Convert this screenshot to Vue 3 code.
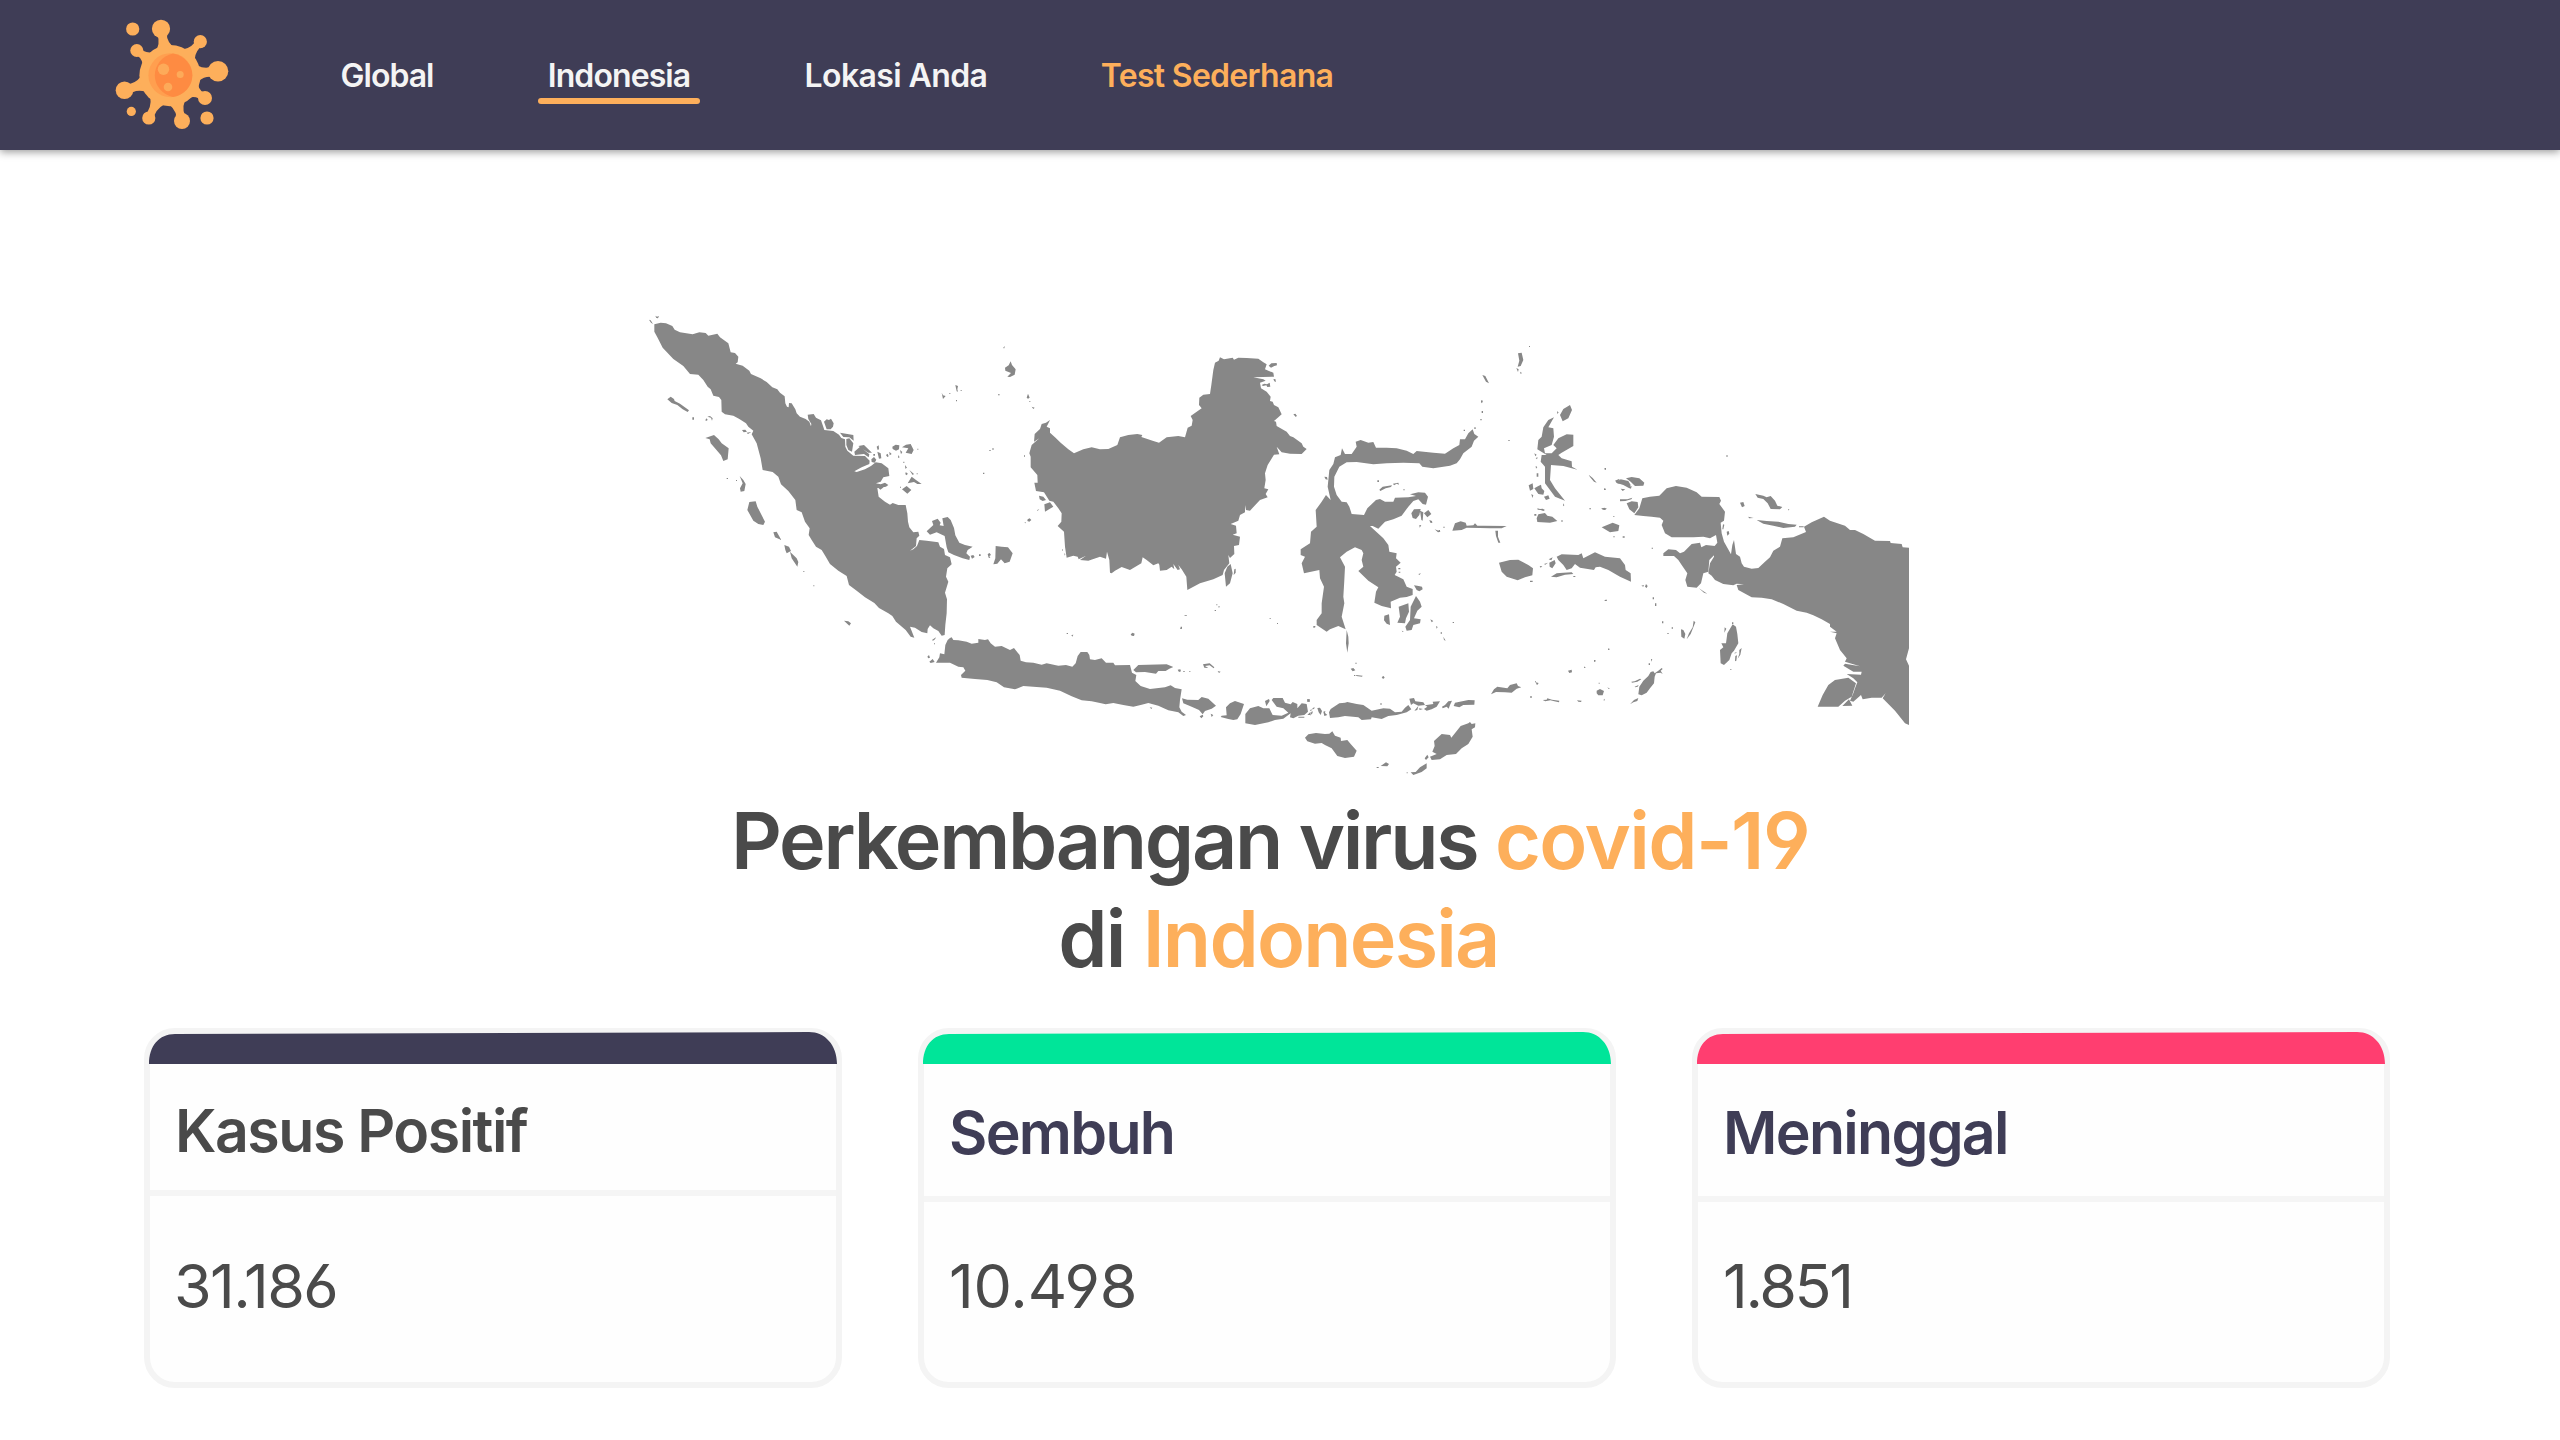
<script setup>
const links = [
  { label: 'Global', cls: 'w-global' },
  { label: 'Indonesia', cls: 'w-indonesia active' },
  { label: 'Lokasi Anda', cls: 'w-lokasi' },
  { label: 'Test Sederhana', cls: 'w-test accent' },
]

const cards = [
  { title: 'Kasus Positif', value: '31.186', cls: 'positive' },
  { title: 'Sembuh', value: '10.498', cls: 'recovered' },
  { title: 'Meninggal', value: '1.851', cls: 'deaths' },
]

// Virus logo: spikes are knobs joined to the body by flared necks.
const body = { x: 170, y: 75.6 }
const knobs = [
  [161, 28.8, 9.1], [136.8, 50.5, 6.5], [200.3, 41.7, 6.6], [218, 71.3, 10.3],
  [124.5, 90.2, 8.8], [205, 98, 7], [148.8, 118, 6.6], [182, 121, 8],
]
const specks = [[132.7, 29, 6.6], [131.3, 111.4, 4.6], [207, 118, 6.6]]
const necks = knobs.map(([x, y, r]) => {
  const dx = x - body.x
  const dy = y - body.y
  const d = Math.hypot(dx, dy)
  const ux = dx / d
  const uy = dy / d
  const p = (along, off) =>
    `${(body.x + ux * along - uy * off).toFixed(2)} ${(body.y + uy * along + ux * off).toFixed(2)}`
  const m = (29 + d) / 2 - 1
  return `M${p(28, 8)}Q${p(m, 1.4)} ${p(d, r * 0.75)}L${p(d, -r * 0.75)}Q${p(m, -1.4)} ${p(28, -8)}Z`
})

// Map outlines, drawn at three units per pixel from each region's origin.
const regions = [
  {
    x: 640, y: 300,
    d: `M43 73L62 68L78 70L97 78L104 89L120 97L158 103L178 97L197 99L205 107L232 101L240 112L265 130L272 157L285 159L295 170L293 187L287 191L308 197L328 212L333 222L362 235L380 246L397 262L412 268L420 278L434 289L436 310L441 320L446 322L447 309L455 310L466 328L470 340L480 350L497 357L508 365L513 379L514 372L505 357L503 344L521 342L528 353L543 361L549 378L553 390L580 393L597 404L604 414L615 418L616 440L622 452L640 467L675 468L689 482L688 492L665 502L643 514L650 516L675 508L693 498L707 487L725 490L745 505L748 528L730 532L722 545L708 550L722 553L735 548L745 555L738 560L712 564L716 590L735 605L750 614L758 609L775 615L797 615L802 640L804 665L808 682L820 697L835 695L838 707L830 715L828 738L810 752L820 748L831 738L838 720L860 722L895 727L900 740L912 747L915 765L930 772L935 793L922 805L918 830L925 845L915 878L921 898L920 940L916 975L914 1005L905 1007L895 993L880 985L870 976L863 987L862 1000L845 996L825 983L810 980L823 1013L812 1010L797 990L768 965L757 948L745 940L717 924L703 909L675 892L650 872L627 855L620 828L595 812L570 792L556 768L545 750L528 740L515 720L506 705L509 685L495 665L485 637L470 630L466 600L445 573L423 553L415 530L398 516L368 510L362 475L350 430L335 403L340 392L325 380L318 370L298 357L280 347L255 343L245 335L244 300L237 291L220 287L212 268L203 260L190 240L175 224L150 222L130 198L100 177L68 143L52 112L43 95Z
    M27 59l5 2 7 11-6-4zM46 47l5 3 6-2-3 7-5-1z
    M82 298L92 290L102 297L104 303L120 311L147 331L143 336L128 328L112 315L95 309Z
    M157 352h5v7h-5zM196 360l4-5 3 5-5 3zM202 350l8-2 8 7-2 7-3-9z
    M196 414L222 405L236 418L245 430L266 445L263 478L250 483L243 466L212 430L209 418Z
    M260 534h4v3h-4zM288 540h3v3h-3zM299 528L310 540L317 552L313 573L302 575L300 565L308 550Z
    M328 606L347 604L352 620L362 640L375 665L370 675L355 672L340 662L322 630Z
    M400 697L410 695L424 720L405 712ZM433 735L447 740L453 753L440 760L436 750ZM450 755L470 775L475 786L472 800L455 775Z
    M306 390l10-1 5 6-10 2zM320 398l14-2-10 6zM612 962L625 964L633 970L628 977Z
    M552 365L560 358L567 360L573 356L581 370L579 380L572 388L560 388Z
    M600 398L640 405L641 422L628 412L610 411ZM619 417L628 415L640 430L636 455L625 450L619 435Z
    M643 455L660 440L688 463L686 472L672 462L645 465ZM655 438L672 435L696 458L685 458Z
    M710 440l6-4 1 12-4 2zM712 455L722 460L724 475L717 476ZM694 478l8-7 7 8-5 9-9-2zM700 462h5v5h-5zM738 465l5-4 3 8-4 2zM748 455l7 7-6 4zM757 440l10-6 11 2-1 12-9 4-10-5zM780 450l7 6-4 7zM775 465l4 7-5 2zM786 442L798 434L812 432L821 450L815 462L797 458L805 445ZM832 446h3v3h-3zM790 485h3v4h-3zM795 495l6 8-5 3zM797 517l6 3-2 6-5-3zM808 510l14 12-4 3zM830 520h3v3h-3z
    M803 550L815 530L828 540L845 552L832 552L822 546ZM786 568L800 558L814 570L802 581L795 575ZM780 560h3v3h-3zM713 562l20-2-12 9z
    M860 694L880 675L876 663L893 656L902 668L899 676L911 678L907 655L923 651L932 660L942 684L946 706L958 728L975 735L998 740L983 750L979 760L990 770L988 780L968 775L942 765L925 757L920 742L914 708L890 697L870 704Z
    M992 767l8-2 4 6-8 5zM1017 763h5v5h-5zM1043 762l6-3 4 6-5 3 3 6-5-1zM1067 738L1085 740L1104 742L1118 760L1109 785L1094 790L1083 778L1072 791L1060 793L1066 775Z
    M1095 203L1106 196L1112 184L1116 195L1127 208L1124 224L1110 231L1102 230L1113 219L1096 212ZM1090 142l5-3-3 7zM905 278l4 8 8 2-8 9zM946 255l8 3-2 10 2 7-4-1zM928 279h3v3h-3zM962 270h3v3h-3zM948 300h3v4h-3zM1074 283h5v3h-5zM1048 450h4v3h-4zM1057 445h4v4h-4zM1029 518h4v4h-4zM862 1070l5-5 3 8-5 2zM868 1085l10-8 6 9-12 3zM876 1020l12-8-3 6-6 4zM882 1030h3v3h-3zM490 813h3v3h-3zM520 856h3v3h-3z`,
  },
  {
    x: 1000, y: 330,
    d: `M125 282L138 278L150 270L140 290L150 295L150 308L165 322L182 338L205 358L222 370L250 358L275 352L300 358L325 357L352 345L360 322L385 315L412 312L427 315L424 321L460 333L477 338L500 322L535 318L555 322L563 293L575 287L578 270L572 258L605 235L597 225L598 203L610 194L630 192L634 165L640 120L645 98L656 92L660 82L672 88L698 83L702 89L715 83L740 84L775 86L790 97L800 103L795 118L805 122L820 128L822 140L760 142L790 148L797 152L780 158L783 175L800 185L812 200L810 213L818 215L822 225L835 232L845 253L835 262L822 273L828 275L830 288L860 305L870 318L880 322L905 340L910 350L920 357L905 372L870 371L845 367L830 350L838 373L822 374L803 405L795 430L797 450L793 475L805 478L797 492L803 502L780 510L750 542L738 540L735 525L735 547L720 555L715 572L692 582L708 587L710 610L698 614L720 620L717 645L702 648L703 672L690 684L685 675L688 700L672 720L668 735L640 748L600 760L562 780L559 740L545 718L535 705L540 718L533 720L520 702L523 718L515 710L500 720L480 722L478 704L475 700L460 706L440 690L428 682L424 700L390 720L365 711L345 722L335 730L330 728L328 690L321 665L318 686L300 680L265 692L240 690L258 677L236 688L233 680L220 677L200 683L195 650L192 605L173 588L184 575L185 550L175 535L160 515L148 512L132 487L108 483L103 458L113 458L112 435L92 412L92 380L88 370L95 345L118 325L102 335L104 312L120 297Z
    M117 497L130 500L138 510L128 513L119 508ZM133 523L150 517L160 530L135 545ZM83 568l6-3 5 5-6 5-6-2zM73 578l4-2v4zM112 540l6-3-6 7zM72 376h3v4h-3zM186 660l3-3v6zM193 670l3 2-2 5zM80 203l4-12 5 12-5 3zM95 230l9 3-4 4zM88 213h3v3h-3zM674 730L682 710L692 702L698 730L690 760L678 770ZM703 718l4-2v12l-6 7z
    M806 107l8-7 16-1 1 7-8 2-10 5zM820 148l6-1 2 9-5-2zM785 165l8-4 8 2 8-5 2 12-9 1-3-5-10 2zM880 253l6-2 5 7-4 2zM644 840h4v3h-4zM655 829l4-1-2 7zM649 823h3v3h-3zM541 893h4v4h-4zM557 855h3v3h-3zM809 864h3v3h-3zM831 879h3v3h-3z`,
  },
  {
    x: 900, y: 600,
    d: `M108 188L118 172L120 160L133 163L136 135L143 120L150 114L155 112L160 120L175 121L200 125L215 131L235 128L235 117L255 120L264 118L272 130L285 140L305 138L330 150L342 144L352 157L359 165L362 182L378 187L400 188L425 194L440 190L475 197L498 195L517 200L527 190L533 168L542 156L562 156L568 165L570 178L585 180L605 175L618 188L640 188L645 196L690 195L696 218L709 225L706 243L722 258L750 267L795 262L812 256L825 264L845 268L840 300L838 322L845 335L858 345L850 348L835 337L805 331L775 317L745 309L725 314L700 320L670 315L640 309L617 313L600 309L575 304L545 301L515 289L480 272L440 263L400 260L370 258L345 268L312 262L290 247L262 240L225 237L185 233L183 225L196 212L190 202L175 200L150 188Z
    M700 210L715 195L800 193L820 201L808 206L797 213L775 213L768 221L735 216L708 217Z
    M833 209l8-1 2 6-6 2zM850 213h4v3h-4zM868 213h3v3h-3zM909 193l20-3 14 12-2 3-12-9-14 2 10 6-12-1zM953 213l9 2-5 4zM692 103l6-5 6 3-2 7-7-1zM500 99h4v3h-4zM514 105l6-1-3 6zM842 80h4v6h-4zM854 45h3v3h-3zM749 322l8 1-3 4z
    M846 295L862 299L895 300L905 291L925 296L948 317L935 326L915 333L908 343L897 330L875 320L850 310ZM899 349l9-5 2 5-6 6zM932 341l8 4-5 6z
    M978 322L990 310L1005 303L1032 312L1026 330L1022 342L1012 358L1000 360L985 357L962 351L965 347L980 346Z
    M1036 342L1050 325L1075 318L1090 325L1108 325L1118 345L1145 347L1165 338L1150 325L1130 320L1115 300L1120 294L1148 294L1155 308L1172 313L1178 306L1192 312L1192 325L1205 310L1220 312L1224 335L1213 345L1195 347L1180 355L1170 352L1172 340L1150 356L1125 360L1105 367L1065 375L1036 370Z
    M1095 303l12-6 2 6-10 16zM1221 298l8-1 1 8-8 1zM1195 350h18v3h-18zM1222 345l10-10-2 10zM1230 330l9-2-7 5z
    M1340 90L1345 110L1346 130L1342 158L1338 130ZM1240 78h4v5h-4z`,
  },
  {
    x: 1290, y: 340,
    d: `M135 352L152 345L156 325L165 342L185 342L200 320L197 305L212 300L235 308L250 306L258 323L290 323L320 325L350 332L370 342L380 333L430 338L465 341L490 325L508 315L510 298L525 298L535 280L548 268L553 282L565 290L552 302L545 320L520 340L510 358L500 370L480 377L430 385L397 380L388 370L340 368L290 370L250 373L200 366L170 367L148 380L133 410L132 440L140 465L155 485L170 487L178 500L185 522L222 525L232 505L258 480L270 477L285 485L310 485L315 473L355 472L378 468L360 463L385 457L405 458L414 470L408 494L398 492L385 478L370 483L355 500L335 527L310 538L285 545L265 566L248 558L240 558L262 578L280 595L295 615L298 635L320 640L318 655L332 668L318 680L320 695L314 705L340 718L350 740L368 747L368 765L350 771L330 773L302 785L303 805L275 798L253 788L258 755L265 742L235 722L205 693L220 680L215 660L220 640L215 630L195 622L170 635L150 652L165 680L163 720L160 770L163 790L155 830L167 868L145 858L120 868L110 875L80 855L80 840L95 820L95 790L102 740L90 715L88 690L42 700L35 670L45 650L32 645L32 628L60 610L63 575L80 560L77 510L95 485L108 465L122 480L113 440L118 390L130 372Z
    M103 410l8 1 2 8-6-1zM72 858h4v4h-4zM13 222l6 4-3 4zM372 736l14 2 10 2 2 8-10 6-8-4zM385 702l8-2-5 5zM325 684h6v4h-6zM326 695h5v3h-5z
    M326 800L355 790L357 815L348 835L345 850L322 848L330 830ZM362 800L378 768L390 785L395 800L382 812L372 835L392 838L390 850L370 855L365 870L350 872L346 860L360 840ZM283 827l14-4 3 32-10-4-8-10zM335 872l6 2-3 2zM421 838l9 5-5 4zM438 858l5 3-3 5zM452 877h4v4h-4zM460 890l7 12-5-2z
    M364 520L372 508L392 507L388 525L378 537L368 534ZM390 512l10 5-2 25-4-2zM402 520L415 510L424 522L412 532ZM388 555l6 1-5 7zM418 540l8 3 1 6-6-1zM434 568l12 4 6 3-8 2zM446 570h4v4h-4zM460 560h4v3h-4z
    M262 421h5v5h-5zM268 449L278 440L306 436L303 441L287 445L271 453ZM309 431l16-3 2 6-7-3-8 5zM340 448h4v3h-4z
    M487 572L495 550L512 544L527 548L530 557L550 556L555 550L562 557L580 557L650 558L635 565L600 565L570 564L530 563L515 570ZM616 572L624 572L624 590L631 608L625 608L618 588Z
    M577 105L586 108L597 130L588 125ZM573 181l6 1-3 8-3-3zM575 213h4v6h-4zM571 237h4v4h-4zM684 40L695 38L700 60L692 78L683 80L688 62ZM679 84l7 4-2 8zM690 95l6 4-4 3zM717 18h3v3h-3zM655 300h4v3h-4zM553 262h4v5h-4zM521 269h4v4h-4z
    M810 225L820 207L840 195L846 210L835 235L818 244ZM801 214l5 3-4 5z
    M792 232L775 262L790 265L792 290L785 315L762 325L765 340L785 340L800 325L790 315L805 295L830 283L850 284L850 318L815 338L805 345L815 355L845 364L846 380L862 389L820 378L783 375L780 420L795 445L825 482L795 470L765 430L765 380L752 365L755 345L770 345L742 328L745 300L755 290L760 262L775 240Z
    M733 340l7 4-4 5zM737 354l6-2-2 6zM737 378l5 3-4 5zM740 400h5v10h-5zM716 436L728 430L730 447L720 452ZM733 445L745 438L753 434L755 445L763 453L760 464L745 462ZM724 462l6 4-3 8zM762 470L775 466L779 476L768 480ZM733 522h6v5h-6zM742 505l8 2 8-1 7 4-5 3-8-3-9-1zM740 535L745 523L765 519L772 527L787 530L802 543L780 548L742 546ZM814 541h4v4h-4zM820 490l3 6-4 3z
    M896 404l12 10 12 14-8-3-12-14zM942 445l6 2-5 3zM944 384h4v4h-4zM898 505h5v3h-5zM936 505l12 1-2 3-9-1zM975 422l12-5 3 4-7 3 7 7-8-1z
    M935 562L968 548L988 556L985 573L960 577ZM627 668L660 660L685 659L715 675L729 685L727 706L705 712L683 721L650 710L635 695ZM720 722h8v4h-8z
    M749 678l8 1-5 4zM762 672l12-4-8 6zM776 658l12-6-4 9zM778 668l16-8 3 10-10 15-8-5zM783 710L800 700L820 698L845 697L850 702L825 704L800 712ZM850 708h6v3h-6z
    M800 650L815 643L865 645L875 640L880 655L915 637L945 650L990 655L1005 675L1007 690L1022 700L1023 725L990 710L955 690L930 680L917 682L912 690L870 683L855 672L845 685L830 690L820 675L805 660Z
    M946 779h5v3h-5zM912 961h4v4h-4zM955 926h3v3h-3zM883 981h3v3h-3zM488 846h4v3h-4z`,
  },
  {
    x: 1290, y: 640,
    d: `M182 86l8-2 6 7-8 3zM196 68h4v3h-4zM198 105l20 2-2 3-17-2zM275 111l6-3 3 5-5 4zM192 105h4v3h-4z
    M66 205l8-3-2 6zM82 204l8-1 6 10-4 12-6-8zM100 215l6-2-1 6 7 6-9 3zM62 220l5-8 1 7-8 8z
    M117 217L122 207L148 190L165 188L172 186L200 192L220 195L245 212L280 205L300 206L315 217L335 215L345 203L355 195L364 208L350 217L320 225L295 228L275 237L245 232L243 238L215 240L205 232L165 228L145 232L120 234Z
    M358 176L372 174L376 184L400 187L405 195L385 197L370 190L363 195ZM373 212L385 198L382 210ZM402 207L412 200L405 196L430 192L428 185L450 184L440 200L425 208L410 212ZM387 205l12 2-10 3zM456 200L465 195L475 184L486 182L480 195L476 206L470 200L458 205ZM491 198L495 188L535 180L554 181L553 194L520 195L508 202ZM271 190h4v4h-4z
    M45 293L55 283L78 279L105 282L118 281L127 274L135 287L152 293L153 303L172 300L182 312L200 332L192 350L165 354L142 348L125 325L105 315L95 309L75 311L52 304Z
    M260 381h6v3h-6zM272 378L288 367L297 372L292 379ZM362 397L377 396L390 382L410 370L410 385L395 396L370 405ZM350 397h3v3h-3zM404 355l8-11 4 8-8 8z
    M420 350L440 342L427 335L434 318L432 303L455 282L480 285L484 293L512 258L535 250L540 246L545 252L556 250L555 262L545 268L548 290L535 312L515 325L498 342L470 345L450 358L425 360Z
    M603 163L612 148L622 140L652 145L660 135L680 130L684 138L694 142L680 146L665 158L645 157L618 156ZM737 127l9 2-5 7zM735 124h3v3h-3zM721 168h4v6h-4zM758 180l12-1 2-4 14 4 22 3-1 5-14-3-12-3-15 3zM861 181l14 1-2 4-8-1zM834 92L845 89L846 97L838 99ZM882 80h3v3h-3zM912 60h4v4h-4zM920 152L930 147L942 153L938 166L925 166L920 160ZM926 128h3v3h-3zM952 142l8 4-4 1zM940 180l5-4-2 6zM955 26h3v3h-3z
    M1020 193L1032 180L1045 174L1042 183L1030 187ZM1083 57l4 1-4 7zM1076 70h4v5h-4zM1045 163L1048 140L1060 122L1075 108L1082 96L1090 94L1094 100L1105 92L1115 84L1118 87L1112 92L1118 102L1112 98L1098 100L1094 110L1092 130L1080 145L1070 158L1055 166ZM1024 125l10-1 16-8 4 2-12 7-16 3zM1034 140l12-5-3 5-8 2z`,
  },
  {
    x: 1600, y: 430,
    d: `M103 255L118 235L127 205L150 200L178 197L200 175L228 168L260 173L290 187L305 200L358 201L363 212L358 222L375 245L372 272L362 278L365 310L372 335L393 373L397 345L402 330L408 372L420 380L425 400L432 410L455 416L475 414L495 395L510 382L520 362L540 350L547 325L580 322L618 306L612 290L635 277L672 260L690 272L735 287L750 300L765 300L790 312L825 332L870 333L872 339L905 342L908 352L927 353L927 655L918 688L927 707L927 885L915 880L885 842L848 805L857 790L845 803L815 803L788 808L783 795L760 815L750 812L760 790L765 775L772 757L760 745L740 732L783 734L785 725L760 725L730 707L735 701L780 709L735 695L740 685L720 660L705 625L710 610L690 605L710 605L690 590L690 582L665 568L640 556L620 548L590 542L550 522L515 508L485 503L455 502L415 480L410 465L432 463L410 461L400 466L370 462L345 450L335 437L325 430L330 400L342 380L342 350L352 338L348 315L330 325L310 320L280 322L240 322L215 322L195 310L185 285L190 272L180 263L155 260L130 258Z
    M190 370L205 358L228 360L240 370L252 365L275 342L300 338L304 352L318 345L345 348L342 376L328 390L325 425L310 430L303 460L290 473L262 470L256 450L262 430L245 405L235 390L222 378L190 378Z
    M653 830L668 795L685 765L705 750L745 743L768 760L755 800L735 812L715 830ZM727 828L747 808L757 827Z
    M80 220L95 214L113 216L115 232L103 250L88 238ZM60 208l22 0 15-5-3 5-18 5-16 1zM48 158L62 148L85 153L92 165L88 175L70 165ZM78 145L95 141L118 145L133 158L130 167L105 168L92 155ZM62 176l14 2-8 5zM83 172l12-4-2 8zM12 176h5v4h-5zM14 115h4v4h-4zM3 236l10-3 8 3-8 4zM40 258h3v3h-3zM40 319h4v3h-4zM68 319h6v4h-6zM155 353h4v3h-4zM379 76h4v4h-4z
    M420 218L430 216L434 228L426 232ZM466 192L490 197L500 202L512 198L525 212L532 227L547 231L540 238L512 237L503 220L490 207L473 203ZM564 237l5 3-5 1zM445 260l12 3 4 1-14 1zM470 270L500 273L535 275L565 282L590 284L585 290L550 294L520 287L490 281ZM597 289h14v3h-14zM380 305l6-2 2 8-6 6zM369 283l4 1-3 14-3 0z
    M296 474l12 8 14 9-10-3zM124 467l8-2-2 5zM138 462l5 6-3 6-5-4zM158 502h4v6h-4zM165 520h4v8h-4zM186 574h4v6h-4zM215 592h4v4h-4zM202 609h4v3h-4zM14 510h5v3h-5zM24 656h3v3h-3z
    M243 598L250 600L256 612L253 626L244 620ZM281 572L286 577L272 612L260 628L267 610L278 592Z
    M362 700L360 660L370 652L364 640L378 640L382 610L398 583L408 590L412 612L415 640L402 662L395 670L388 690L372 705ZM374 592l5 4-6 12zM396 577h4v5h-4zM418 660l7-6-4 20-8 12 5-14zM406 678l5-2-2 16-4 2zM404 668l8-2-8 5zM391 717h3v3h-3z`,
  },
]
</script>

<template>
  <div class="page">
    <header class="navbar">
      <svg class="logo" viewBox="110 15 124 120" width="124" height="120">
        <g fill="#fdaf5b">
          <path v-for="(d, i) in necks" :key="'n' + i" :d="d" />
          <circle v-for="(k, i) in knobs" :key="'k' + i" :cx="k[0]" :cy="k[1]" :r="k[2]" />
          <circle v-for="(k, i) in specks" :key="'s' + i" :cx="k[0]" :cy="k[1]" :r="k[2]" />
          <circle :cx="body.x" :cy="body.y" r="30.6" />
        </g>
        <circle cx="170.4" cy="75.2" r="22" fill="#ff9f4f" />
        <path d="M173 53.4C162 56 154.800 65 154.800 75.300S162 94.500 173 97C184.500 95 192.300 86 192.300 75.200S184.500 55.500 173 53.400Z" fill="#fe8b42" />
        <g fill="#fdaa59">
          <circle cx="163.500" cy="69.300" r="5.700" />
          <circle cx="180.200" cy="74.600" r="3.500" />
          <circle cx="168" cy="87" r="4.300" />
        </g>
      </svg>
      <nav class="links">
        <a v-for="l in links" :key="l.label" class="link" :class="l.cls">{{ l.label }}</a>
      </nav>
    </header>

    <main>
      <svg class="map" viewBox="640 300 1280 490" width="1280" height="490" fill="#878787">
        <path
          v-for="(r, i) in regions"
          :key="i"
          :d="r.d"
          :transform="`translate(${r.x} ${r.y}) scale(0.33333)`"
        />
      </svg>

      <h1 class="title">
        <span class="line first">Perkembangan virus <em>covid-19</em></span>
        <span class="line second">di <em>Indonesia</em></span>
      </h1>

      <section class="cards">
        <article v-for="c in cards" :key="c.title" class="card" :class="c.cls">
          <svg class="strip" viewBox="0 0 688 32" width="688" height="32">
            <path d="M0 32C0 14 10 2 26 2L660 0C676 0 688 13 688 32Z" />
          </svg>
          <h2>{{ c.title }}</h2>
          <p>{{ c.value }}</p>
        </article>
      </section>
    </main>
  </div>
</template>

<style>
body {
  background: #fff;
}
</style>

<style scoped>
.page {
  width: 2560px;
  height: 1440px;
  overflow: hidden;
  background: #fff;
  font-family: Inter, 'Liberation Sans', sans-serif;
  color: #4a4a4a;
}

.navbar {
  display: flex;
  align-items: center;
  box-sizing: border-box;
  height: 150px;
  padding-left: 110px;
  background: #3f3d56;
  box-shadow: 0 2px 8px rgba(0, 0, 0, 0.4);
}

.logo {
  display: block;
}

.links {
  display: flex;
  gap: 95px;
  margin-left: 97px;
}

.link {
  position: relative;
  text-align: center;
  white-space: nowrap;
  color: #f4f4f4;
  font-family: Inter, sans-serif;
  font-weight: 600;
  font-size: 32px;
  line-height: 49px;
}

.w-global { width: 112px; letter-spacing: -1px; }
.w-indonesia { width: 162px; letter-spacing: -0.9px; }
.w-lokasi { width: 202px; letter-spacing: -0.6px; }
.w-test { width: 250px; letter-spacing: -0.7px; }

.accent {
  color: #fdaf5b;
}

.active::after {
  content: '';
  position: absolute;
  left: 0;
  right: 0;
  top: 47.5px;
  height: 6px;
  border-radius: 3px;
  background: #fdaf5b;
}

main {
  padding-top: 151px;
}

.map {
  display: block;
  margin: -1px auto 1px;
}

.title {
  margin: 0;
  font-size: 79px;
  font-weight: 600;
  line-height: 98px;
  text-align: center;
  font-feature-settings: 'cv03', 'cv04';
}

.line {
  display: block;
  white-space: nowrap;
}

.first {
  padding-right: 20px;
  letter-spacing: -2.3px;
}

.first em {
  letter-spacing: -1.6px;
}

.second {
  padding-right: 3px;
  letter-spacing: -1.8px;
}

.title em {
  font-style: normal;
  color: #fdaf5b;
}

.cards {
  display: flex;
  gap: 76px;
  margin-top: 41px;
  padding-left: 144px;
}

.card {
  display: flex;
  flex-direction: column;
  box-sizing: border-box;
  width: 698px;
  height: 360px;
  border: 6px solid #f4f4f4;
  border-radius: 31px;
  background: #fefefe;
}

.strip {
  display: block;
  flex: none;
  margin: -2px -1px 0;
}

.positive .strip { fill: #3f3d56; }
.recovered .strip { fill: #00e599; }
.deaths .strip { fill: #ff3e70; }

.card h2 {
  box-sizing: border-box;
  height: 138px;
  margin: 0;
  padding: 8px 0 0 25px;
  border-bottom: 6px solid #f5f5f5;
  font-size: 59px;
  font-weight: 600;
  line-height: 122px;
  letter-spacing: -1.7px;
  color: #3f3d56;
}

.positive h2 {
  height: 132px;
  padding-top: 6px;
  letter-spacing: -1.5px;
  color: #4a4a4a;
}

.card p {
  flex: 1;
  margin: 0;
  padding: 18px 0 0 25px;
  font-size: 61px;
  line-height: 132px;
  font-feature-settings: 'cv03', 'cv04';
}

.positive p {
  padding: 24px 0 0 24px;
  letter-spacing: -1.6px;
}

.recovered p {
  letter-spacing: -0.2px;
}

.deaths p {
  letter-spacing: -2.4px;
}
</style>
